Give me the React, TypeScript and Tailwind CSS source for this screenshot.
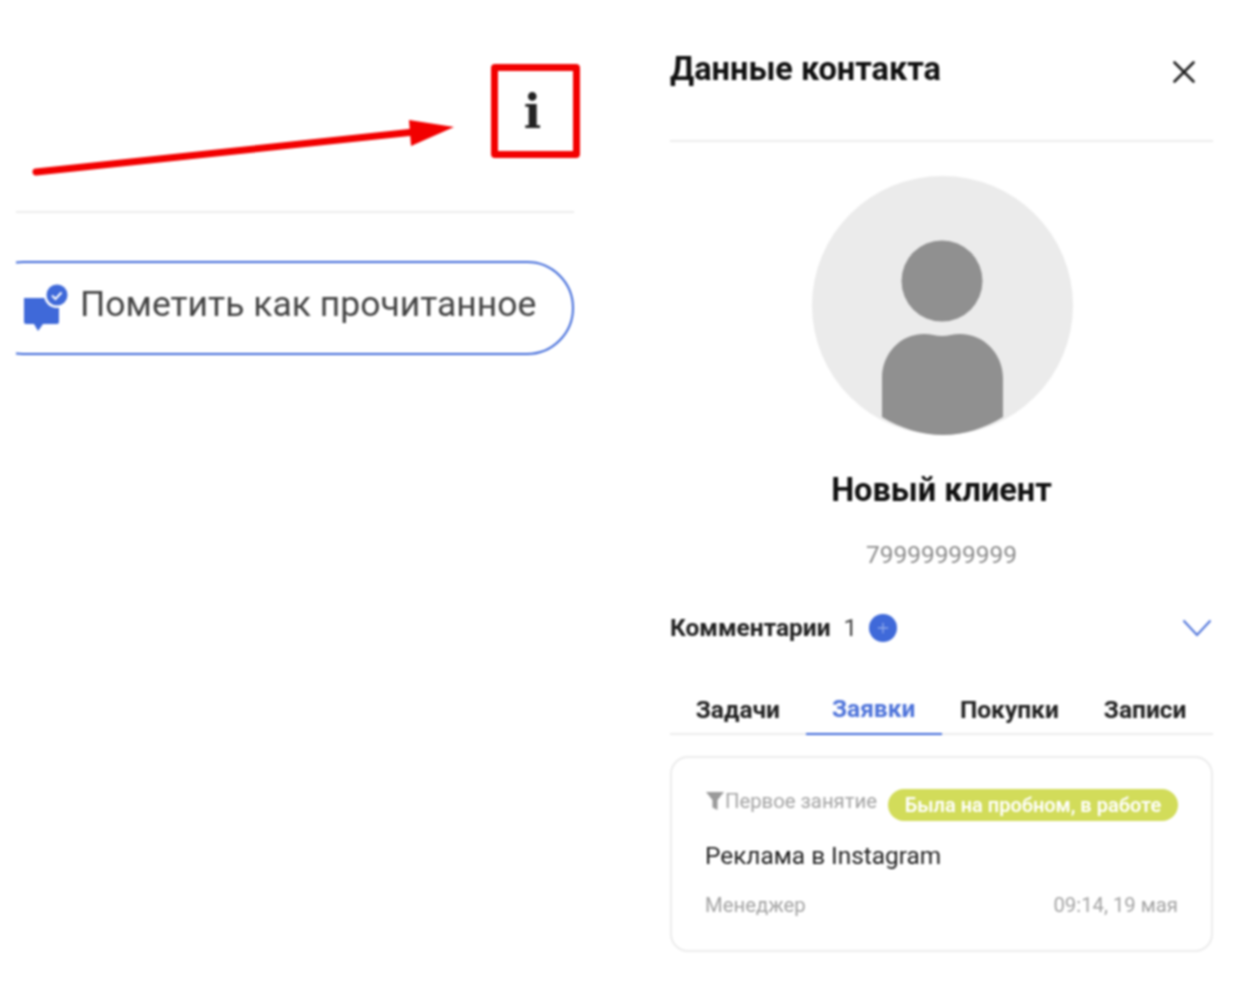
import { X, Plus } from "lucide-react";

function ReadIcon() {
  return (
    <svg width="46" height="48" viewBox="0 0 46 48" className="shrink-0">
      <path d="M0 14h35v24a2 2 0 0 1-2 2H19l-5 7-4-7H2a2 2 0 0 1-2-2z" fill="#3f69d9" />
      <circle cx="33" cy="11" r="13" fill="#fff" />
      <circle cx="33" cy="11" r="10.500" fill="#3f69d9" />
      <path d="M28 11.500l3.500 3.500 6-6.500" fill="none" stroke="#fff" strokeWidth="2" />
    </svg>
  );
}

function Avatar() {
  return (
    <svg width="261" height="259" viewBox="0 0 261 259">
      <ellipse cx="130.500" cy="129.500" rx="130.500" ry="129.500" fill="#ebebeb" />
      <circle cx="130" cy="105" r="40.500" fill="#909090" />
      <path d="M70 241V202c0-24 18-44 42-44 7 0 12 2 18 2s11-2 18-2c24 0 43 20 43 44v39c-18 11-39 18-60 18s-43-7-61-18z" fill="#909090" />
    </svg>
  );
}

function Annotation() {
  return (
    <svg width="430" height="60" viewBox="0 0 430 60" className="absolute left-[30px] top-[118px]">
      <path d="M6 54L384 14" stroke="#f20000" strokeWidth="7" strokeLinecap="round" />
      <path d="M379 2L424 9L381 28z" fill="#f20000" />
    </svg>
  );
}

export default function App() {
  return (
    <div className="relative flex h-[1000px] w-[1250px] gap-[96px] bg-white pl-4 font-['Roboto',sans-serif] blur-[0.8px]">
      <Annotation />

      {/* Left column */}
      <div className="w-[558px] shrink-0">
        <div className="flex h-[213px] justify-end border-b-2 border-[#ececec] pt-[64px]">
          <div className="-mr-[6px] flex h-[94px] w-[89px] justify-center rounded-[4px] border-[7px] border-[#f20000] pr-[6px] pt-[15px]">
            <span className="font-['DejaVu_Serif',serif] text-[46px] font-bold leading-[52px] text-[#222]">i</span>
          </div>
        </div>

        <div className="mt-[48px] overflow-hidden">
          <button className="-ml-[40px] flex h-[94px] w-[598px] items-center gap-[10px] rounded-[47px] border-2 border-[#3f69d9] pl-[46px]">
            <ReadIcon />
            <span className="whitespace-nowrap pb-[6px] text-[35.500px] leading-none text-[#444]">Пометить как прочитанное</span>
          </button>
        </div>
      </div>

      {/* Contact panel */}
      <div className="w-[543px] shrink-0">
        <div className="flex h-[142px] items-start justify-between border-b-2 border-[#ececec] pt-[49px]">
          <h2 className="text-[32.500px] font-bold leading-[40px] text-[#111]">Данные контакта</h2>
          <X size={38} strokeWidth={1.700} className="mr-[10px] mt-[4px] text-[#222]" />
        </div>

        <div className="mt-[34px] flex flex-col items-center">
          <div className="translate-x-[1px]">
            <Avatar />
          </div>
          <h3 className="mt-[35px] text-[32.500px] font-bold leading-[40px] text-[#111]">Новый клиент</h3>
          <div className="mt-[30px] text-[24.400px] leading-[30px] text-[#8c8c8c]">79999999999</div>
        </div>

        <div className="mt-[41px] flex h-[34px] items-center">
          <span className="text-[24.500px] font-bold text-[#222]">Комментарии</span>
          <span className="ml-[13px] text-[24.500px] text-[#444]">1</span>
          <span className="ml-[12px] flex h-[28px] w-[28px] items-center justify-center rounded-full bg-[#3f69d9]">
            <Plus size={16} className="text-[#8ea8ea]" />
          </span>
          <svg width="30" height="18" viewBox="0 0 30 18" className="ml-auto mr-[1px]">
            <path d="M1.500 1.500L15 16L28.500 1.500" fill="none" stroke="#4f74da" strokeWidth="2" />
          </svg>
        </div>

        <div className="mt-[40px] flex h-[50px] border-b-2 border-[#ececec]">
          <div className="-mb-[2px] flex h-[50px] w-[136px] items-center justify-center text-[24.500px] font-bold text-[#222]">Задачи</div>
          <div className="-mb-[2px] flex h-[50px] w-[136px] items-center justify-center border-b-2 border-[#3f69d9] text-[24.500px] font-bold text-[#4f74da]">Заявки</div>
          <div className="-mb-[2px] flex h-[50px] w-[136px] items-center justify-center text-[24.500px] font-bold text-[#222]">Покупки</div>
          <div className="-mb-[2px] flex h-[50px] w-[136px] items-center justify-center text-[24.500px] font-bold text-[#222]">Записи</div>
        </div>

        <div className="mt-[21px] h-[196px] rounded-[18px] border-2 border-[#ececec] px-[33px] pt-[30px]">
          <div className="flex items-start">
            <svg width="20" height="20" viewBox="0 0 20 20" className="mt-[3px] shrink-0">
              <path d="M1 1h18l-6.500 8v10l-5-2.500V9z" fill="#9a9a9a" />
            </svg>
            <span className="text-[20.300px] leading-[26px] text-[#a3a3a3]">Первое занятие</span>
            <span className="ml-[11px] mt-[1px] flex h-[32px] flex-1 items-center justify-center rounded-full bg-[#d2dc5a] text-[20px] font-semibold text-white">Была на пробном, в работе</span>
          </div>
          <div className="mt-[19px] text-[24.400px] leading-[32px] text-[#222]">Реклама в Instagram</div>
          <div className="mt-[20px] flex justify-between text-[20.300px] leading-[26px] text-[#a3a3a3]">
            <span>Менеджер</span>
            <span>09:14, 19 мая</span>
          </div>
        </div>
      </div>
    </div>
  );
}
